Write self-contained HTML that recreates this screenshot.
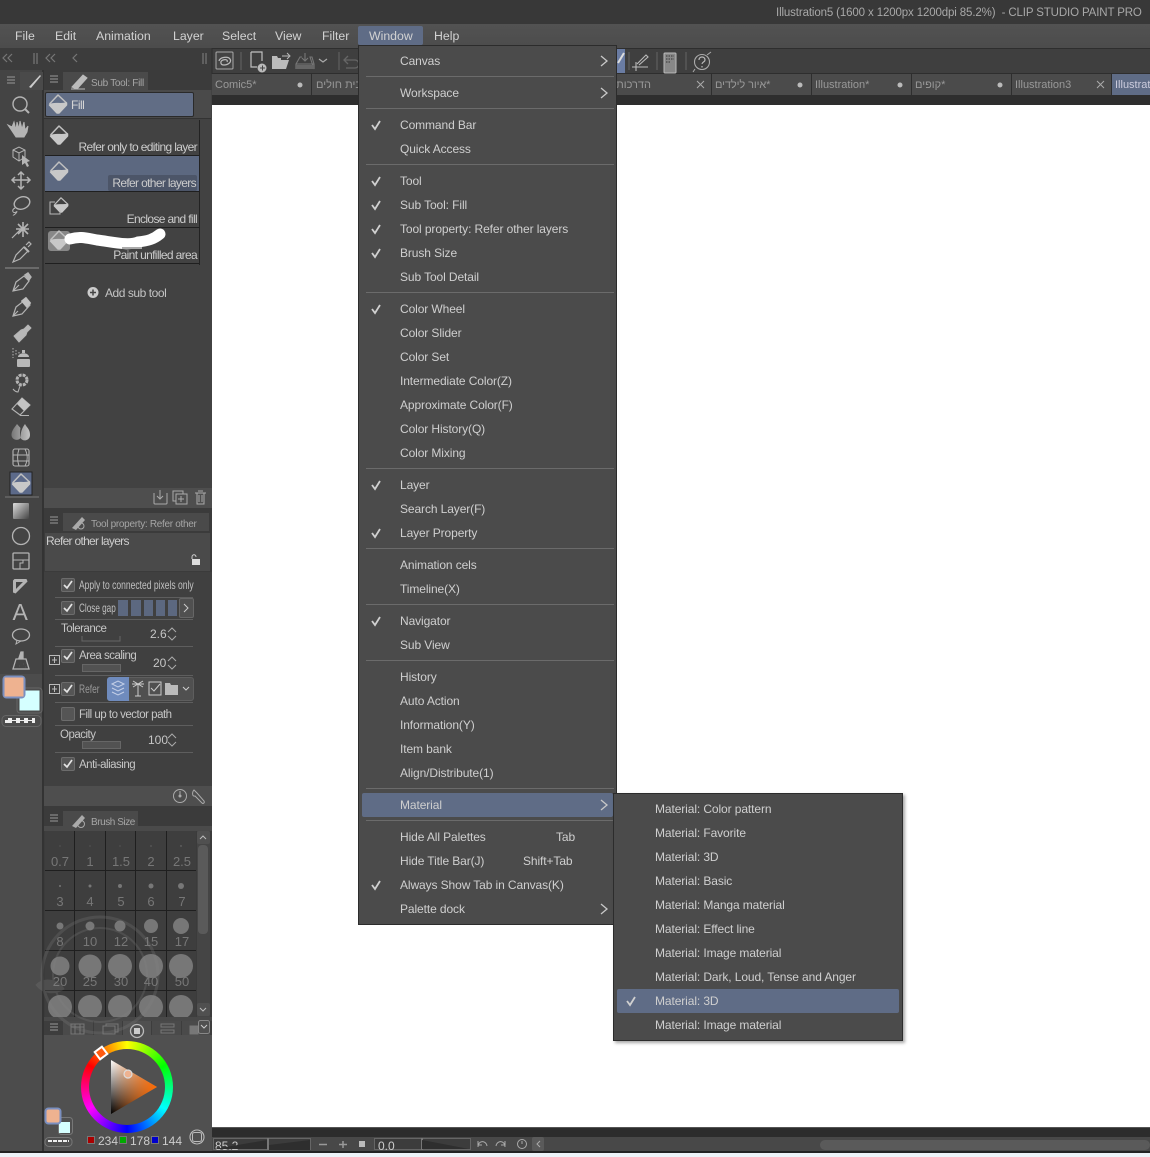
<!DOCTYPE html>
<html><head><meta charset="utf-8"><style>
*{box-sizing:border-box}
html,body{margin:0;padding:0}
body{width:1150px;height:1157px;position:relative;overflow:hidden;background:#edf3f8;font-family:"Liberation Sans",sans-serif;font-size:12px;color:#c8c8c8}
.a{position:absolute}
.t{position:absolute;white-space:nowrap;line-height:14px}
.m{position:absolute;white-space:nowrap;line-height:16px;font-size:12.3px;color:#d2d2d2;top:28px}
.i{position:absolute;left:400px;white-space:nowrap;line-height:16px;font-size:12px;color:#cfcfcf;letter-spacing:-.1px}
.j{position:absolute;left:655px;white-space:nowrap;line-height:16px;font-size:12px;color:#cfcfcf;letter-spacing:-.1px}
.s{position:absolute;left:366px;width:248px;height:1px;background:#6b6b6b}
.tab{position:absolute;top:74px;width:99px;height:21px;background:#4b4b4b;color:#999;font-size:11px;line-height:22px;padding-left:3px;white-space:nowrap;overflow:hidden}
.sub{position:absolute;left:45px;width:154px;height:36px;border-bottom:1px solid #1f1f1f;text-align:right;padding-right:2px;padding-top:20px;line-height:14px;font-size:12px;letter-spacing:-.65px;color:#ccc}
.ln{position:absolute;left:55px;width:138px;height:1px;background:#5e5e5e}
.cb{position:absolute;left:61px;width:14px;height:14px;background:#555;border:1px solid #6c6c6c;border-radius:2px}
.sl{position:absolute;left:82px;width:39px;height:8px;background:#525252;border:1px solid #666}
.p{position:absolute;white-space:nowrap;line-height:14px;font-size:11.5px;letter-spacing:-.5px;color:#c6c6c6}
.n{position:absolute;white-space:nowrap;line-height:14px;font-size:12px;color:#c6c6c6}
.c{position:absolute;white-space:nowrap;line-height:14px;font-size:12px;color:#c0c0c0;transform-origin:0 50%}
.h{position:absolute;white-space:nowrap;line-height:14px;font-size:10px;letter-spacing:-.3px;color:#a6a6a6}
.b{position:absolute;top:0;font-size:13px;color:#777;text-align:center;width:30px;line-height:15px}
</style></head><body>

<div class="a" style="left:0;top:0;width:1150px;height:24px;background:#383838"></div>
<div class="t" style="left:776px;top:6px;color:#a8a8a8;font-size:11.5px;letter-spacing:-.13px">Illustration5 (1600 x 1200px 1200dpi 85.2%)&nbsp; - CLIP STUDIO PAINT PRO</div>
<div class="a" style="left:0;top:24px;width:1150px;height:24px;background:linear-gradient(#525252,#4c4c4c)"></div>
<div class="m" style="left:15px">File</div><div class="m" style="left:55px">Edit</div><div class="m" style="left:96px">Animation</div><div class="m" style="left:173px">Layer</div><div class="m" style="left:222px">Select</div><div class="m" style="left:275px">View</div><div class="m" style="left:322px">Filter</div>
<div class="a" style="left:358px;top:26px;width:65px;height:19px;background:#5f6c86;border-radius:2px"></div>
<div class="m" style="left:369px">Window</div><div class="m" style="left:434px">Help</div>

<!-- top rows -->
<div class="a" style="left:0;top:48px;width:212px;height:22px;background:#3c3c3c"></div>
<div class="a" style="left:212px;top:48px;width:938px;height:26px;background:#3f3f3f;border-top:1px solid #2e2e2e;border-bottom:1px solid #2e2e2e"></div>
<div class="a" style="left:0;top:70px;width:44px;height:1081px;background:#444"></div>
<div class="a" style="left:0;top:674px;width:42px;height:477px;background:#4c4c4c"></div>
<div class="a" style="left:44px;top:70px;width:168px;height:1081px;background:#3b3b3b"></div>
<div class="a" style="left:42px;top:70px;width:2px;height:1081px;background:#333"></div>
<div class="a" style="left:212px;top:74px;width:938px;height:31px;background:#2e2e2e"></div>

<!-- tabs -->
<div class="tab" style="left:212px;letter-spacing:0">Comic5*</div>
<div class="tab" style="left:312px;padding-left:4px"><bdi dir="rtl">*בית חולים</bdi></div>
<div class="tab" style="left:612px;padding-left:0;padding-right:60px" dir="rtl">הדרכות</div>
<div class="tab" style="left:712px;padding-left:3px;letter-spacing:-.1px"><bdi dir="rtl">*איור לילדים</bdi></div>
<div class="tab" style="left:812px">Illustration*</div>
<div class="tab" style="left:912px"><bdi dir="rtl">*קופים</bdi></div>
<div class="tab" style="left:1012px">Illustration3</div>
<div class="tab" style="left:1112px;background:#5f6c86;color:#ccd;width:38px">Illustration5</div>

<!-- canvas -->
<div class="a" style="left:212px;top:105px;width:938px;height:1022px;background:#fff"></div>
<div class="a" style="left:212px;top:1127px;width:938px;height:10px;background:#2c2c2c;border-top:1px solid #555"></div>
<div class="a" style="left:212px;top:1137px;width:938px;height:14px;background:#484848"></div>
<div class="a" style="left:0;top:1151px;width:1150px;height:2px;background:#222"></div>
<div class="a" style="left:820px;top:1140px;width:330px;height:10px;background:#5a5a5a;border-radius:5px"></div>
<div class="a" style="left:213px;top:1138px;width:98px;height:12px;background:#3c3c3c;border:1px solid #666"></div>
<div class="a" style="left:267px;top:1138px;width:2px;height:12px;background:#777"></div>
<div class="a" style="left:374px;top:1138px;width:97px;height:12px;background:#3c3c3c;border:1px solid #666"></div>
<div class="a" style="left:421px;top:1138px;width:2px;height:12px;background:#777"></div>
<div class="t" style="left:215px;top:1139px;color:#ccc;font-size:12px">85.2</div>
<div class="t" style="left:378px;top:1139px;color:#ccc;font-size:12px">0.0</div>
<div class="a" style="left:532px;top:1137px;width:12px;height:14px;background:#5a5a5a;border-radius:2px"></div>

<!-- sub tool panel -->
<div class="a" style="left:44px;top:90px;width:168px;height:398px;background:#424242"></div>
<div class="a" style="left:44px;top:90px;width:167px;height:29px;background:#4a4a4a;border-bottom:1px solid #333"></div>
<div class="a" style="left:63px;top:72px;width:85px;height:18px;background:#4a4a4a"></div>
<div class="a" style="left:20px;top:72px;width:23px;height:18px;background:#4a4a4a"></div>
<div class="h" style="left:91px;top:77px">Sub Tool: Fill</div>
<div class="a" style="left:45px;top:92px;width:149px;height:25px;background:#616d85;border:1px solid #2a2a2a;border-radius:2px"></div>
<div class="t" style="left:71px;top:98px;font-size:12px;letter-spacing:-.5px;color:#d5d5d5">Fill</div>
<div class="a" style="left:199px;top:120px;width:1px;height:145px;background:#222"></div>
<div class="sub" style="top:120px">Refer only to editing layer</div>
<div class="sub" style="top:156px;background:#5c6880"><span style="background:#4c5568;border-radius:2px;padding:1px 1px 1px 4px">Refer other layers</span></div>
<div class="sub" style="top:192px">Enclose and fill</div>
<div class="sub" style="top:228px">Paint unfilled area</div>
<div class="t" style="left:105px;top:286px;font-size:12px;letter-spacing:-.45px;color:#c4c4c4">Add sub tool</div>
<div class="a" style="left:44px;top:488px;width:168px;height:20px;background:#4e4e4e"></div>

<!-- tool property -->
<div class="a" style="left:63px;top:513px;width:146px;height:18px;background:#4a4a4a"></div>
<div class="h" style="left:91px;top:516px;top:518px">Tool property: Refer other</div>
<div class="a" style="left:45px;top:533px;width:165px;height:38px;background:#4a4a4a"></div>
<div class="t" style="left:46px;top:534px;font-size:12px;letter-spacing:-.7px;color:#ccc">Refer other layers</div>
<div class="a" style="left:44px;top:572px;width:168px;height:214px;background:#404040"></div>
<div class="a" style="left:44px;top:786px;width:168px;height:20px;background:#4e4e4e"></div>

<div class="ln" style="top:597px"></div><div class="ln" style="top:619px"></div><div class="ln" style="top:646px"></div><div class="ln" style="top:675px"></div><div class="ln" style="top:702px"></div><div class="ln" style="top:725px"></div><div class="ln" style="top:752px"></div>

<div class="cb" style="top:578px"></div><div class="cb" style="top:601px"></div><div class="cb" style="top:649px"></div><div class="cb" style="top:682px"></div><div class="cb" style="top:707px"></div><div class="cb" style="top:757px"></div>
<div class="c" style="left:79px;top:578px;transform:scaleX(.71)">Apply to connected pixels only</div>
<div class="c" style="left:79px;top:601px;transform:scaleX(.68)">Close gap</div>
<div class="a" style="left:118px;top:600px;width:10px;height:16px;background:#5c6880"></div><div class="a" style="left:131px;top:600px;width:10px;height:16px;background:#5c6880"></div><div class="a" style="left:144px;top:600px;width:9px;height:16px;background:#5c6880"></div><div class="a" style="left:156px;top:600px;width:9px;height:16px;background:#5c6880"></div><div class="a" style="left:168px;top:600px;width:9px;height:16px;background:#5c6880"></div>
<div class="a" style="left:179px;top:598px;width:15px;height:20px;background:#505050;border:1px solid #666;border-radius:2px"></div>
<div class="p" style="left:61px;top:622px">Tolerance</div>
<div class="n" style="left:150px;top:627px">2.6</div>
<div class="p" style="left:79px;top:649px">Area scaling</div>
<div class="sl" style="top:664px"></div>
<div class="n" style="left:153px;top:656px">20</div>
<div class="c" style="left:79px;top:682px;transform:scaleX(.7);color:#999">Refer</div>
<div class="a" style="left:107px;top:677px;width:87px;height:24px;background:#505050;border:1px solid #5e5e5e;border-radius:3px"></div>
<div class="a" style="left:107px;top:677px;width:22px;height:24px;background:#6f8bbd;border-radius:3px 0 0 3px"></div>
<div class="p" style="left:79px;top:708px">Fill up to vector path</div>
<div class="p" style="left:60px;top:728px">Opacity</div>
<div class="sl" style="top:741px"></div>
<div class="n" style="left:148px;top:733px">100</div>
<div class="p" style="left:79px;top:758px">Anti-aliasing</div>

<!-- brush size -->
<div class="a" style="left:63px;top:811px;width:75px;height:18px;background:#4a4a4a"></div>
<div class="h" style="left:91px;top:816px;letter-spacing:-.45px">Brush Size</div>
<div class="a" style="left:44px;top:826px;width:168px;height:5px;background:#4a4a4a"></div>
<div class="a" style="left:45px;top:831px;width:151px;height:186px;background:#3e3e3e;overflow:hidden">
<div class="b" style="left:0;top:23px">0.7</div><div class="b" style="left:30px;top:23px">1</div><div class="b" style="left:61px;top:23px">1.5</div><div class="b" style="left:91px;top:23px">2</div><div class="b" style="left:122px;top:23px">2.5</div>
<div class="b" style="left:0;top:63px">3</div><div class="b" style="left:30px;top:63px">4</div><div class="b" style="left:61px;top:63px">5</div><div class="b" style="left:91px;top:63px">6</div><div class="b" style="left:122px;top:63px">7</div>
<div class="b" style="left:0;top:103px">8</div><div class="b" style="left:30px;top:103px">10</div><div class="b" style="left:61px;top:103px">12</div><div class="b" style="left:91px;top:103px">15</div><div class="b" style="left:122px;top:103px">17</div>
<div class="b" style="left:0;top:143px">20</div><div class="b" style="left:30px;top:143px">25</div><div class="b" style="left:61px;top:143px">30</div><div class="b" style="left:91px;top:143px">40</div><div class="b" style="left:122px;top:143px">50</div>
</div>
<div class="a" style="left:197px;top:831px;width:13px;height:186px;background:#454545"></div>
<div class="a" style="left:198px;top:845px;width:10px;height:89px;background:#5a5a5a;border-radius:4px"></div>
<div class="a" style="left:197px;top:831px;width:13px;height:13px;background:#505050;border-radius:2px"></div>
<div class="a" style="left:197px;top:1003px;width:13px;height:13px;background:#505050;border-radius:2px"></div>

<!-- colour wheel panel -->
<div class="a" style="left:44px;top:1017px;width:168px;height:4px;background:#484848"></div>
<div class="a" style="left:44px;top:1021px;width:168px;height:14px;background:#3d3d3d"></div>
<div class="a" style="left:63px;top:1021px;width:30px;height:14px;background:#4a4a4a"></div>
<div class="a" style="left:94px;top:1021px;width:28px;height:14px;background:#4a4a4a"></div>
<div class="a" style="left:123px;top:1021px;width:28px;height:14px;background:#505050"></div>
<div class="a" style="left:152px;top:1021px;width:29px;height:14px;background:#4a4a4a"></div>
<div class="a" style="left:182px;top:1021px;width:28px;height:14px;background:#4a4a4a"></div>
<div class="a" style="left:44px;top:1035px;width:168px;height:116px;background:#505050"></div>
<div class="a" style="left:81px;top:1041px;width:92px;height:92px;border-radius:50%;background:conic-gradient(from -60deg,#f00,#ff0,#0f0,#0ff,#00f,#f0f,#f00)"></div>
<div class="a" style="left:89px;top:1049px;width:76px;height:76px;border-radius:50%;background:#505050"></div>
<div class="t" style="left:98px;top:1134px;font-size:12px;color:#ccc">234</div>
<div class="t" style="left:130px;top:1134px;font-size:12px;color:#ccc">178</div>
<div class="t" style="left:162px;top:1134px;font-size:12px;color:#ccc">144</div>
<div class="a" style="left:87px;top:1136px;width:8px;height:8px;background:#a00;border:1px solid #777"></div>
<div class="a" style="left:119px;top:1136px;width:8px;height:8px;background:#0a0;border:1px solid #777"></div>
<div class="a" style="left:151px;top:1136px;width:8px;height:8px;background:#00c;border:1px solid #777"></div>

<!-- icon layer -->
<svg class="a" style="left:0;top:0" width="1150" height="1157" viewBox="0 0 1150 1157" fill="none">
<defs>
<linearGradient id="g1" x1="0" y1="0" x2="0" y2="1"><stop offset="0" stop-color="#fff"/><stop offset="1" stop-color="#000"/></linearGradient>
<linearGradient id="g2" x1="0" y1="0" x2="1" y2="0"><stop offset="0" stop-color="#ff6a00" stop-opacity="0"/><stop offset="1" stop-color="#ff6a00"/></linearGradient>
<linearGradient id="g3" x1="0" y1="0" x2="1" y2="1"><stop offset="0" stop-color="#ddd"/><stop offset="1" stop-color="#444"/></linearGradient>
<linearGradient id="g4" x1="0" y1="0" x2="1" y2="0"><stop offset="0" stop-color="#777"/><stop offset="1" stop-color="#c4c4c4"/></linearGradient>
<g id="bk"><path d="M-8.500 0 0-9 8.500-1" stroke="#c0c0c0" stroke-width="1.500" fill="none" stroke-linejoin="round"/><path d="M-8.500 1C-4-2 3 1 8.500-1V1L1 9H-1Z" fill="#c8c8c8" stroke="#c8c8c8" stroke-width="1.500" stroke-linejoin="round"/></g>
</defs>

<!-- top-left chevrons -->
<g stroke="#777" stroke-width="1.2"><path d="M7 54 3 58l4 4M12 54 8 58l4 4M50 54l-4 4 4 4M55 54l-4 4 4 4M77 54l-4 4 4 4"/><path d="M34 53v11M37 53v11M203 53v11M206 53v11"/></g>
<g stroke="#999" stroke-width="1"><path d="M7 77h8M7 80h8M7 83h8M50 76h8M50 79h8M50 82h8M50 517h8M50 520h8M50 523h8M50 815h8M50 818h8M50 821h8M50 1024h8M50 1027h8M50 1030h8"/></g>

<!-- tab-head icons -->
<path d="M29 87 40 75l1 1-10 12Z" fill="#ccc"/>
<path d="M72 87 83 75l4 3-10 11ZM71 89h14" fill="#bbb" stroke="#bbb"/>
<path d="M72 528 82 517l3 3-9 10Z" fill="#aaa"/><circle cx="81" cy="526" r="3" stroke="#aaa"/>
<path d="M72 826 82 815l3 3-9 10Z" fill="#aaa"/><circle cx="81" cy="824" r="3.5" stroke="#aaa"/>

<!-- toolbar -->
<rect x="216" y="52" width="17" height="17" stroke="#aaa" fill="#444" rx="1"/><path d="M219 61c1-4 9-5 11-2s-2 6-6 6-4-4-1-5 5 0 4 2" stroke="#bbb" stroke-width="1.2"/>
<path d="M212 48v26" stroke="#2e2e2e"/><path d="M241 52v18M339 52v18" stroke="#666"/>
<path d="M251 52h11v9M251 52v15h6" stroke="#c0c0c0" stroke-width="1.2"/><circle cx="262" cy="68" r="4.5" fill="#bbb"/><path d="M260 68h5M262.500 65.500v5" stroke="#444"/>
<path d="M272 69V56h5l1 2h3v2h8l-3 9Z" fill="#bbb"/><path d="M282 56h7M287 53l3 3-3 3" stroke="#bbb"/>
<path d="M296 69v-5l4-7h2M310 57h2l2 7v5ZM296 64h18M305 53v8M302 58l3 3 3-3" stroke="#777" stroke-width="1.1"/><rect x="296" y="65" width="18" height="4" fill="#666"/>
<path d="M319 59l4 3 4-3" stroke="#aaa" stroke-width="1.2"/>
<path d="M344 60h11c5 0 5 8 0 8h-9M348 56l-4 4 4 4" stroke="#666" stroke-width="1.3"/>
<!-- toolbar right -->
<rect x="617" y="49" width="8" height="24" fill="#6a7ca3"/><path d="M618 63l6-10" stroke="#ddd" stroke-width="2"/>
<path d="M632 67h16M636 62v9M637 64l9-9 2 2-9 8" stroke="#bbb" stroke-width="1.1"/>
<path d="M629 52v18M686 52v18M657 52v18" stroke="#666"/>
<rect x="664" y="53" width="12" height="20" rx="1" fill="#888" stroke="#bbb"/><path d="M666 56h8M666 59h8M666 62h5" stroke="#333" stroke-dasharray="1.500 1"/>
<circle cx="702" cy="62" r="7.500" stroke="#aaa" stroke-width="1.1"/><path d="M699 60c0-4 6-4 6 0 0 2-3 2-3 4M702 66v1.500" stroke="#bbb" stroke-width="1.2"/><path d="M707 55l4-3M695 69l-2 3" stroke="#aaa"/>

<!-- tab dots/x -->
<g fill="#bbb"><circle cx="300" cy="85" r="2.500"/><circle cx="800" cy="85" r="2.500"/><circle cx="900" cy="85" r="2.500"/><circle cx="1000" cy="85" r="2.500"/></g>
<path d="M697 81l7 7m0-7-7 7M1097 81l7 7m0-7-7 7" stroke="#aaa"/>

<!-- left tools -->
<g stroke="#b4b4b4" stroke-width="1.4">
<circle cx="20" cy="104" r="7"/><path d="M25 109l4 4" stroke-width="2"/>
<path d="M14 122l2 8 1-8 2 7 1-8 2 8 2-7 1 8 3-4-1 6-3 5h-8l-4-6-4-6 4 2z" fill="#b4b4b4" stroke-width="1"/>
<path d="M13 150l6-3 6 3v7l-6 4-6-4zM13 150l6 3 6-3M19 153v8" stroke-width="1"/><path d="M22 155l8 6-3 1 2 4-2 1-2-4-3 2z" fill="#b4b4b4" stroke="none"/>
<path d="M21 172v17M13 180h16M18 175l3-3 3 3M18 186l3 3 3-3M15 177l-3 3 3 3M27 177l3 3-3 3" stroke-width="1.5"/>
<ellipse cx="22" cy="203" rx="8" ry="6" transform="rotate(-20 22 203)"/><path d="M15 208c-4 2-2 6 1 4s-2 4-3 3" stroke-width="1"/>
<path d="M12 238l10-10" stroke-width="1.2"/><path d="M23 222v15M16 229h13M18 224l10 10M28 224l-10 10" stroke-width="1.6"/>
<path d="M13 262l3-7 8-8 4 4-8 8zM26 245l3-3 2 2-3 3" stroke-width="1.2" /><path d="M24 247l5 5" stroke-width="2"/>
<path d="M5 268h34" stroke="#777"/>
<path d="M13 291l3-9 8-6 5 5-6 8zM13 291l6-6" stroke-width="1.2"/><path d="M25 275l3-2 3 4-2 3z" fill="#b4b4b4"/>
<path d="M13 316l3-9 9-7 5 5-8 9zM13 316l5-5" stroke-width="1.2"/><path d="M21 301l5-4 5 6-4 5z" fill="#c0c0c0" stroke-width=".5"/>
<path d="M14 336l7-6 3-1 4-4 3 3-4 4-1 3-7 7z" fill="#b8b8b8" stroke-linejoin="round" stroke-width="1"/>
<rect x="17" y="359" width="13" height="8" rx="1" fill="#b8b8b8" stroke="none"/><path d="M18 357c0-5 11-5 11 0z" fill="#b8b8b8" stroke="none"/><path d="M22 350v3h3v-3z" fill="#b8b8b8" stroke="none"/><path d="M13 348v10M16 350v6M19 352v2" stroke-dasharray="1.500 1.500" stroke-width="1"/>
<circle cx="22" cy="380" r="5" stroke-width="3" stroke-dasharray="3 1"/><path d="M20 386l-2 6c-3 0-4-2-5-3" stroke-width="1.1"/>
<path d="M12 409l10-11 8 7-10 10z" stroke-width="1.1"/><path d="M17 404l5-6 8 7-6 6z" fill="#c4c4c4" stroke="none"/><path d="M20 415.500h9" stroke-width="1"/>
<path d="M17 424c-3 4-5.500 7-5.500 11s5.500 7 9 3c-1-5 0-10 0-10zM25 424c-3 4-4.500 8-4.500 14 2 4 9.500 3 9.500-3s-3-7-5-11z" fill="url(#g4)" stroke="none"/>
<rect x="13" y="449" width="16" height="17" rx="2" stroke-width="1.1"/><path d="M13 455h16M13 461h16M19 449c-2 6-2 11 0 17M25 449c3 6 3 11 0 17" stroke-width="1"/>
</g>
<rect x="10" y="472" width="22" height="23" fill="#5c6a8a" stroke="#222"/>
<use href="#bk" x="21" y="483"/>
<path d="M5 497h34" stroke="#777"/>
<rect x="13" y="503" width="16" height="16" rx="1" fill="url(#g3)"/>
<g stroke="#b4b4b4" stroke-width="1.3">
<circle cx="21" cy="536" r="8.500"/>
<rect x="13" y="553" width="16" height="16" rx="1"/><path d="M13 560h16M20 569v-6h3v-3" stroke-width="1"/>
<path d="M14.500 580.500h12l-12 12z" stroke-width="3" stroke-linejoin="bevel"/>
<text x="12.500" y="620" font-size="23" fill="#b4b4b4" stroke="none" font-family="Liberation Sans">A</text>
<ellipse cx="21" cy="635" rx="8.500" ry="6"/><path d="M17 640l-1 4 5-3" stroke-width="1"/>
<path d="M21 652v5M16 659h10l3 10h-16z" stroke-width="1.300"/><path d="M21 652h2v6h-4z" fill="#b4b4b4"/><path d="M19 666h.1M23 664h.1M25 667h.1" stroke-width="1.500"/>
</g>
<!-- swatches -->
<rect x="17" y="688" width="25" height="25" rx="3" stroke="#666"/>
<rect x="19.500" y="690.500" width="20" height="20" fill="#d5ffff"/>
<rect x="2.500" y="675.500" width="23" height="23" rx="4" fill="#7a8fc0"/>
<rect x="4.500" y="677.500" width="19" height="19" fill="#eeb290"/>
<rect x="2" y="715.500" width="39" height="11" rx="4" stroke="#666"/>
<path d="M5 720h3v-2h4v2h4v-2h4v2h4v-2h4v2h4v-2h3v5h-3v-2h-4v2h-4v-2h-4v2h-4v-2h-4v2H5z" fill="#eee"/>

<!-- sub tool icons -->
<use href="#bk" x="58" y="104"/><use href="#bk" x="59" y="135"/><use href="#bk" x="59" y="171"/>
<g transform="translate(61 205) scale(.8)"><use href="#bk"/></g><path d="M55 202h-5v12h10v-4" stroke="#b8b8b8"/>
<rect x="48" y="231" width="22" height="20" rx="3" fill="#888"/><use href="#bk" x="59" y="240"/>
<path d="M70 239c10-3 16-1 27 1 16 2 32 6 41 2 10-1 16-3 22-8" stroke="#fff" stroke-width="11" stroke-linecap="round"/>
<path d="M122 248h20" stroke="#aaa" stroke-width="2"/>
<circle cx="93" cy="292.500" r="5.500" fill="#ccc"/><path d="M90 292.500h6M93 289.500v6" stroke="#444" stroke-width="1.500"/>

<!-- panel bottom icons -->
<g stroke="#aaa" stroke-width="1"><path d="M154 493v10c0 1 1 1 1 1h11c1 0 1-1 1-1v-10M160 490v9M157 496l3 3 3-3"/><rect x="173" y="491" width="10" height="10"/><rect x="176" y="494" width="11" height="10" fill="#4e4e4e"/><path d="M181 496v6M178 499h6"/><path d="M195 493h11M197 493v11h7v-11M198 491h5M199 495v7M202 495v7"/></g>
<rect x="192" y="559" width="8" height="6" fill="#ddd"/><path d="M192 559v-2c0-3 4-3 4 0" stroke="#ccc"/>
<!-- checks -->
<g stroke="#e4e4e4" stroke-width="1.700"><path d="M64 585l3 3 5-7M64 608l3 3 5-7M64 656l3 3 5-7M64 689l3 3 5-7M64 764l3 3 5-7"/></g>
<path d="M184 604l4 4-4 4" stroke="#ccc"/>
<g stroke="#aaa"><path d="M82 636v5h38v-5" stroke="#666"/><path d="M168 632l4-4 4 4M168 636l4 4 4-4M168 661l4-4 4 4M168 665l4 4 4-4M168 738l4-4 4 4M168 742l4 4 4-4"/></g>
<g stroke="#bbb"><rect x="49.500" y="655.500" width="10" height="9"/><path d="M54.500 657v6M52 660h5"/><rect x="49.500" y="684.500" width="10" height="9"/><path d="M54.500 686v6M52 689h5"/></g>
<path d="M112 684l6-3 6 3-6 3zM112 688l6 3 6-3M112 692l6 3 6-3" stroke="#c5d0e8"/>
<path d="M132 684h12M138 684v12M135 696h6M133 681l10 6M143 681l-10 6" stroke="#ccc"/>
<rect x="149" y="682" width="12" height="13" stroke="#ccc"/><path d="M151 688l3 3 6-7" stroke="#ccc"/>
<path d="M165 695v-12h5l1 2h7v10z" fill="#bbb"/>
<path d="M183 687l3 3 3-3" stroke="#ccc"/>
<circle cx="180" cy="796" r="6.500" stroke="#aaa"/><path d="M180 791v5" stroke="#aaa"/><circle cx="180" cy="796" r="1.500" fill="#aaa"/>
<path d="M194 790l3 3 7 8c1 2-1 3-2 2l-7-7c-3 1-3-4-1-6z" stroke="#aaa"/>

<!-- brush grid -->
<g stroke="#1f1f1f"><path d="M45 870.500h151M45 910.500h151M45 950.500h151M45 990.500h151"/><path d="M74.500 831v186M105.500 831v186M135.500 831v186M166.500 831v186"/></g>
<g fill="#777"><circle cx="60" cy="846" r=".5"/><circle cx="90" cy="846" r=".5"/><circle cx="120" cy="846" r=".5"/><circle cx="151" cy="846" r=".6"/><circle cx="181" cy="846" r=".7"/><circle cx="60" cy="886" r="1"/><circle cx="90" cy="886" r="1.500"/><circle cx="120" cy="886" r="2"/><circle cx="151" cy="886" r="2.500"/><circle cx="181" cy="886" r="3"/>
<circle cx="60" cy="926" r="3.500"/><circle cx="90" cy="926" r="4.500"/><circle cx="120" cy="926" r="5.500"/><circle cx="151" cy="926" r="7"/><circle cx="181" cy="926" r="8"/>
<circle cx="60" cy="966" r="9.500"/><circle cx="90" cy="966" r="11.500"/><circle cx="120" cy="966" r="12"/><circle cx="151" cy="966" r="12"/><circle cx="181" cy="966" r="12"/>
<circle cx="60" cy="1007" r="12"/><circle cx="90" cy="1007" r="12"/><circle cx="120" cy="1007" r="12"/><circle cx="151" cy="1007" r="12"/><circle cx="181" cy="1007" r="12"/></g>
<rect x="44" y="1017" width="155" height="4" fill="#484848"/>
<path d="M200 839l3-3 3 3M200 1008l3 3 3-3" stroke="#bbb"/>
<!-- watermark -->
<g stroke="#888" opacity=".22" fill="none"><circle cx="100" cy="975" r="58" stroke-width="3"/><circle cx="100" cy="975" r="47" stroke-width="2"/><path d="M36 985c8-8 22-6 28 4-9 6-21 5-28-4z" fill="#888"/></g>
<!-- wheel header icons -->
<g stroke="#777"><rect x="71" y="1024" width="13" height="10"/><path d="M71 1027h13M75 1024v10M80 1024v10"/><rect x="103" y="1026" width="12" height="8"/><path d="M106 1026v-2h12v8h-3"/><rect x="161" y="1024" width="13" height="3"/><rect x="161" y="1030" width="13" height="3"/><rect x="190" y="1026" width="8" height="8" fill="#777"/></g>
<circle cx="137" cy="1031" r="6.500" stroke="#bbb" stroke-width="1.300"/><rect x="134" y="1028" width="6" height="6" fill="#ccc"/>
<rect x="198.500" y="1020.500" width="11" height="13" rx="2" fill="#505050" stroke="#888"/><path d="M201 1025l3 3 3-3" stroke="#ccc"/>
<!-- wheel triangle -->
<polygon points="111,1060 157,1087 111,1114" fill="url(#g1)"/>
<polygon points="111,1060 157,1087 111,1114" fill="url(#g2)"/>
<circle cx="128" cy="1074" r="4" fill="#eeb290" stroke="#ddd" stroke-width="1.200"/>
<rect x="96.500" y="1048.500" width="9" height="9" fill="#ff5a10" stroke="#fff" stroke-width="2" transform="rotate(-37 101 1053)"/>
<!-- mini swatch -->
<rect x="58.500" y="1117.500" width="14" height="17" rx="3" stroke="#777"/>
<rect x="59" y="1122" width="11" height="11" fill="#d5ffff"/>
<rect x="45.500" y="1108.500" width="15" height="15" rx="3" fill="#eeb290" stroke="#7a8fc0" stroke-width="2"/>
<rect x="45" y="1137.500" width="27" height="9" rx="4" stroke="#777"/>
<path d="M48 1141h21" stroke="#eee" stroke-width="2" stroke-dasharray="4 1"/>
<circle cx="197" cy="1137" r="7" stroke="#bbb" stroke-width="1.100"/><rect x="192.500" y="1132.500" width="9" height="9" rx="2" stroke="#bbb"/>
<!-- status -->
<path d="M267 1140l-53 9h53zM310 1140l-41 5v5h41z" fill="#2e2e2e"/><path d="M422 1140l47 9h-47z" fill="#2e2e2e" />
<path d="M319 1144.500h8M339 1144.500h8M343 1141v7" stroke="#999" stroke-width="1.500"/><rect x="359" y="1141" width="6" height="6" fill="#bbb"/>
<path d="M478 1147c0-7 8-7 9-1M478 1141v4h4M505 1147c0-7-8-7-9-1M505 1141v4h-4" stroke="#aaa"/><circle cx="522" cy="1144" r="4.500" stroke="#aaa"/><path d="M522 1141v3M540 1141l-3 3 3 3" stroke="#aaa"/>
</svg>

<!-- window menu -->
<div class="a" style="left:358px;top:45px;width:259px;height:880px;background:#4b4b4b;border:1px solid #2c2c2c"></div>
<div class="s" style="top:76px"></div><div class="s" style="top:108px"></div><div class="s" style="top:164px"></div><div class="s" style="top:292px"></div><div class="s" style="top:468px"></div><div class="s" style="top:548px"></div><div class="s" style="top:604px"></div><div class="s" style="top:660px"></div><div class="s" style="top:788px"></div><div class="s" style="top:820px"></div>
<div class="a" style="left:362px;top:793px;width:251px;height:24px;background:#5f6c86;border-radius:2px"></div>
<div class="i" style="top:53px">Canvas</div>
<div class="i" style="top:85px">Workspace</div>
<div class="i" style="top:117px">Command Bar</div>
<div class="i" style="top:141px">Quick Access</div>
<div class="i" style="top:173px">Tool</div>
<div class="i" style="top:197px">Sub Tool: Fill</div>
<div class="i" style="top:221px">Tool property: Refer other layers</div>
<div class="i" style="top:245px">Brush Size</div>
<div class="i" style="top:269px">Sub Tool Detail</div>
<div class="i" style="top:301px">Color Wheel</div>
<div class="i" style="top:325px">Color Slider</div>
<div class="i" style="top:349px">Color Set</div>
<div class="i" style="top:373px">Intermediate Color(Z)</div>
<div class="i" style="top:397px">Approximate Color(F)</div>
<div class="i" style="top:421px">Color History(Q)</div>
<div class="i" style="top:445px">Color Mixing</div>
<div class="i" style="top:477px">Layer</div>
<div class="i" style="top:501px">Search Layer(F)</div>
<div class="i" style="top:525px">Layer Property</div>
<div class="i" style="top:557px">Animation cels</div>
<div class="i" style="top:581px">Timeline(X)</div>
<div class="i" style="top:613px">Navigator</div>
<div class="i" style="top:637px">Sub View</div>
<div class="i" style="top:669px">History</div>
<div class="i" style="top:693px">Auto Action</div>
<div class="i" style="top:717px">Information(Y)</div>
<div class="i" style="top:741px">Item bank</div>
<div class="i" style="top:765px">Align/Distribute(1)</div>
<div class="i" style="top:797px">Material</div>
<div class="i" style="top:829px">Hide All Palettes</div>
<div class="i" style="top:829px;left:556px">Tab</div>
<div class="i" style="top:853px">Hide Title Bar(J)</div>
<div class="i" style="top:853px;left:523px">Shift+Tab</div>
<div class="i" style="top:877px">Always Show Tab in Canvas(K)</div>
<div class="i" style="top:901px">Palette dock</div>

<!-- submenu -->
<div class="a" style="left:613px;top:793px;width:290px;height:248px;background:#4b4b4b;border:1px solid #2c2c2c;box-shadow:2px 2px 3px rgba(0,0,0,.35)"></div>
<div class="a" style="left:617px;top:989px;width:282px;height:24px;background:#5f6c86;border-radius:2px"></div>
<div class="j" style="top:801px">Material: Color pattern</div>
<div class="j" style="top:825px">Material: Favorite</div>
<div class="j" style="top:849px">Material: 3D</div>
<div class="j" style="top:873px">Material: Basic</div>
<div class="j" style="top:897px">Material: Manga material</div>
<div class="j" style="top:921px">Material: Effect line</div>
<div class="j" style="top:945px">Material: Image material</div>
<div class="j" style="top:969px">Material: Dark, Loud, Tense and Anger</div>
<div class="j" style="top:993px">Material: 3D</div>
<div class="j" style="top:1017px">Material: Image material</div>

<svg class="a" style="left:0;top:0" width="1150" height="1157" viewBox="0 0 1150 1157" fill="none">
<g stroke="#c8c8c8" stroke-width="1.300"><path d="M601 56l6 5-6 5M601 88l6 5-6 5M601 800l6 5-6 5M601 904l6 5-6 5"/></g>
<g stroke="#d0d0d0" stroke-width="1.800"><path d="M372 125l3 4 5-8M372 181l3 4 5-8M372 205l3 4 5-8M372 229l3 4 5-8M372 253l3 4 5-8M372 309l3 4 5-8M372 485l3 4 5-8M372 533l3 4 5-8M372 621l3 4 5-8M372 885l3 4 5-8M627 1001l3 4 5-8"/></g>
</svg>
</body></html>
